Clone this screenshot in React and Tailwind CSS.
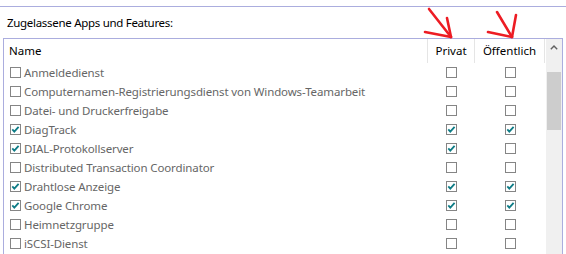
import React from "react";

const rows = [
  { name: "Anmeldedienst", on: false, priv: false, pub: false },
  { name: "Computernamen-Registrierungsdienst von Windows-Teamarbeit", on: false, priv: false, pub: false },
  { name: "Datei- und Druckerfreigabe", on: false, priv: false, pub: false },
  { name: "DiagTrack", on: true, priv: true, pub: true },
  { name: "DIAL-Protokollserver", on: true, priv: true, pub: false },
  { name: "Distributed Transaction Coordinator", on: false, priv: false, pub: false },
  { name: "Drahtlose Anzeige", on: true, priv: true, pub: true },
  { name: "Google Chrome", on: true, priv: true, pub: true },
  { name: "Heimnetzgruppe", on: false, priv: false, pub: false },
  { name: "iSCSI-Dienst", on: false, priv: false, pub: false },
];

function Check({ checked }) {
  return (
    <svg width="11" height="11" viewBox="0 0 11 11" className="shrink-0">
      <rect x="0.5" y="0.5" width="10" height="10" fill="#fff" stroke="#858585" />
      {checked && (
        <polyline
          points="2.3,5.4 4.3,7.6 8.6,2.8"
          fill="none"
          stroke="#0e7c86"
          strokeWidth="1.8"
        />
      )}
    </svg>
  );
}

export default function App() {
  return (
    <div
      className="relative w-[566px] h-[254px] overflow-hidden bg-white text-black"
      style={{ fontFamily: '"Noto Sans", "Open Sans", sans-serif' }}
    >
      <div className="h-[6px]" />
      <div className="border-t border-[#abadde] w-[566px]" />

      <div className="h-[31px] pl-[7px] flex items-center text-[11.5px] tracking-[-0.3px]">
        Zugelassene Apps und Features:
      </div>

      {/* list box */}
      <div className="ml-[3px] w-[560px] h-[220px] border border-b-0 border-[#abadde] flex">
        <div className="w-[542px] flex flex-col">
          {/* header */}
          <div className="h-[24px] flex items-stretch text-[11.5px]">
            <div className="w-[423px] pl-[5px] flex items-center">Name</div>
            <div className="w-px bg-[#e5e5e5]" />
            <div className="w-[46px] flex items-center justify-center">Privat</div>
            <div className="w-px bg-[#e5e5e5]" />
            <div className="w-[69px] flex items-center justify-center">Öffentlich</div>
            <div className="w-px bg-[#e5e5e5]" />
          </div>

          {/* rows */}
          {rows.map((r) => (
            <div key={r.name} className="h-[19px] flex items-center text-[11.5px] text-[#666666]">
              <div className="w-[423px] pl-[6px] flex items-center gap-[3px] whitespace-nowrap tracking-[-0.12px]">
                <Check checked={r.on} />
                <span>{r.name}</span>
              </div>
              <div className="w-px" />
              <div className="w-[46px] flex justify-center pl-px">
                <Check checked={r.priv} />
              </div>
              <div className="w-px" />
              <div className="w-[69px] flex justify-center pl-[2px]">
                <Check checked={r.pub} />
              </div>
            </div>
          ))}
        </div>

        {/* scrollbar */}
        <div className="w-[16px] bg-[#f0f0f0] flex flex-col items-center">
          <div className="h-[17px] flex items-center justify-center">
            <svg width="8" height="5" viewBox="0 0 8 5">
              <polyline points="0.8,4.2 4,1 7.2,4.2" fill="none" stroke="#606060" strokeWidth="1.4" />
            </svg>
          </div>
          <div className="mt-[16px] w-[14px] h-[58px] bg-[#cdcdcd]" />
        </div>
      </div>

      {/* hand-drawn red arrows over the headers */}
      <svg
        className="absolute left-0 top-0 pointer-events-none"
        width="566"
        height="254"
        viewBox="0 0 566 254"
      >
        <g stroke="#ed1c24" strokeWidth="2.6" strokeLinecap="round" fill="none">
          <path d="M429 9 L451 37" />
          <path d="M447 18 L451 37" />
          <path d="M425 32 L451 37" />
          <path d="M497 12 L512 37" />
          <path d="M516 15 L512 37" />
          <path d="M488 32 L512 37" />
        </g>
      </svg>
    </div>
  );
}
